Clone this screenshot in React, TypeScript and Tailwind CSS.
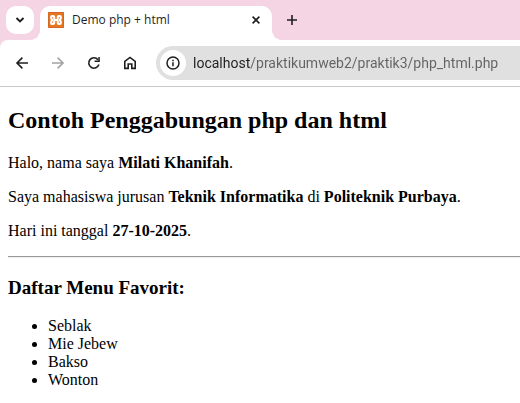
import type { ReactNode } from 'react';

const favorites = ['Seblak', 'Mie Jebew', 'Bakso', 'Wonton'];

function ToolButton({ label, muted = false, children }: { label: string; muted?: boolean; children: ReactNode }) {
  return (
    <button
      type="button"
      aria-label={label}
      className={`flex size-7 shrink-0 items-center justify-center ${muted ? 'text-[#a3a3a3]' : 'text-[#1f1f1f]'}`}
    >
      <svg viewBox="0 0 16 16" className="size-4" fill="none" stroke="currentColor" strokeWidth="1.6">
        {children}
      </svg>
    </button>
  );
}

function XamppLogo() {
  return (
    <svg viewBox="0 0 16 16" className="size-4 shrink-0" aria-hidden="true">
      <rect width="16" height="16" rx="1" fill="#e8761f" />
      <rect x="0.5" y="0.5" width="15" height="15" rx="0.5" fill="none" stroke="#cf6a26" />
      <g fill="none" stroke="#fff" strokeWidth="2.1" strokeLinecap="round" strokeLinejoin="round">
        <path d="M3.2 6.2V5Q3.2 4 4.2 4H5.2Q6.2 4 6.2 5V7Q6.2 8 7.2 8H8.8Q9.8 8 9.8 7V5Q9.8 4 10.8 4H11.8Q12.8 4 12.8 5V6.2L11.9 8 12.8 9.8V11Q12.8 12 11.8 12H10.8Q9.8 12 9.8 11V9Q9.8 8 8.8 8H7.2Q6.2 8 6.2 9V11Q6.2 12 5.2 12H4.2Q3.2 12 3.2 11V9.8L4.1 8Z" />
      </g>
    </svg>
  );
}

function TabStrip() {
  return (
    <div className="flex h-10 bg-[#f5d5e3] pt-1.5 pl-1.5 font-['Open_Sans',sans-serif]">
      <button
        type="button"
        aria-label="Search tabs"
        className="mr-1.5 flex size-7 shrink-0 items-center justify-center rounded-[10px] bg-white text-[#1f1f1f]"
      >
        <svg viewBox="0 0 10 10" className="size-[10px]" fill="none" stroke="currentColor" strokeWidth="1.9">
          <path d="M1.5 3 5 6.5 8.5 3" />
        </svg>
      </button>
      <div className="relative flex w-[232px] items-center rounded-t-[10px] bg-white pr-2 pb-1.5 pl-2 before:absolute before:bottom-0 before:-left-[10px] before:size-[10px] before:bg-[radial-gradient(circle_at_0_0,transparent_10px,white_10px)] after:absolute after:-right-[10px] after:bottom-0 after:size-[10px] after:bg-[radial-gradient(circle_at_100%_0,transparent_10px,white_10px)]">
        <XamppLogo />
        <span className="ml-2 flex-1 text-xs whitespace-nowrap text-[#1f1f1f]">Demo php + html</span>
        <button type="button" aria-label="Close tab" className="flex size-4 items-center justify-center text-[#1f1f1f]">
          <svg viewBox="0 0 8 8" className="size-2" fill="none" stroke="currentColor" strokeWidth="1.6">
            <path d="M0.6 0.6 7.4 7.4M7.4 0.6 0.6 7.4" />
          </svg>
        </button>
      </div>
      <button
        type="button"
        aria-label="New tab"
        className="ml-1.5 flex size-7 shrink-0 items-center justify-center text-[#1f1f1f]"
      >
        <svg viewBox="0 0 10 10" className="size-[10px]" fill="none" stroke="currentColor" strokeWidth="1.6">
          <path d="M5 0V10M0 5H10" />
        </svg>
      </button>
    </div>
  );
}

function Toolbar() {
  return (
    <div className="bg-[#f5d5e3]">
      <div className="flex items-center rounded-tl-lg border-b border-[#c9c9c9] bg-white pt-1.5 pb-1.5 pl-2">
        <div className="flex gap-2">
          <ToolButton label="Back">
            <path d="M14 8H3.2M8.4 2.6 3 8 8.4 13.4" />
          </ToolButton>
          <ToolButton label="Forward" muted>
            <path d="M2 8H12.8M7.6 2.6 13 8 7.6 13.4" />
          </ToolButton>
          <ToolButton label="Reload">
            <path d="M12.9 9.6A5.2 5.2 0 1 1 12 4.7" />
            <path d="M13.8 1.9V7.1H8.6V5.6H12.3V1.9Z" fill="currentColor" stroke="none" />
          </ToolButton>
          <ToolButton label="Home">
            <path d="M2.8 13.4V6.3L8 2.4 13.2 6.3V13.4H9.8V9H6.2V13.4Z" />
          </ToolButton>
        </div>
        <div className="ml-3 flex h-[34px] flex-1 items-center rounded-l-full bg-[#e0e0e0] pl-1">
          <button
            type="button"
            aria-label="View site information"
            className="flex size-[26px] shrink-0 items-center justify-center rounded-full bg-white text-[#1f1f1f]"
          >
            <svg viewBox="0 0 14 14" className="size-[14px]" fill="none" stroke="currentColor" strokeWidth="1.5">
              <circle cx="7" cy="7" r="6" />
              <path d="M7 6.2V10.2M7 3.7V5.2" />
            </svg>
          </button>
          <input
            type="text"
            aria-label="Address"
            defaultValue="localhost/praktikumweb2/praktik3/php_html.php"
            className="ml-[7px] min-w-0 flex-1 bg-[linear-gradient(to_right,#1f1f1f_58px,#626262_58px)] bg-clip-text font-[Roboto,sans-serif] text-sm text-transparent outline-none"
          />
        </div>
      </div>
    </div>
  );
}

export default function App() {
  return (
    <div className="min-h-screen bg-white">
      <header>
        <TabStrip />
        <Toolbar />
      </header>
      <main className="px-2 pt-5 pb-4 font-['Liberation_Serif',serif] text-base leading-[18px] text-black">
        <h1 className="text-2xl leading-[27px] font-bold">Contoh Penggabungan php dan html</h1>
        <div className="mt-5 flex flex-col gap-4">
          <p>
            Halo, nama saya <b>Milati Khanifah</b>.
          </p>
          <p>
            Saya mahasiswa jurusan <b>Teknik Informatika</b> di <b>Politeknik Purbaya</b>.
          </p>
          <p>
            Hari ini tanggal <b>27-10-2025</b>.
          </p>
        </div>
        <hr className="-mr-2 mt-4 h-[2px] border-t border-b border-t-[#9a9a9a] border-b-[#eeeeee]" />
        <h2 className="mt-[19px] text-[19px] leading-[21px] font-bold">Daftar Menu Favorit:</h2>
        <ul className="mt-[19px] list-disc pl-10">
          {favorites.map((name) => (
            <li key={name}>{name}</li>
          ))}
        </ul>
      </main>
    </div>
  );
}
